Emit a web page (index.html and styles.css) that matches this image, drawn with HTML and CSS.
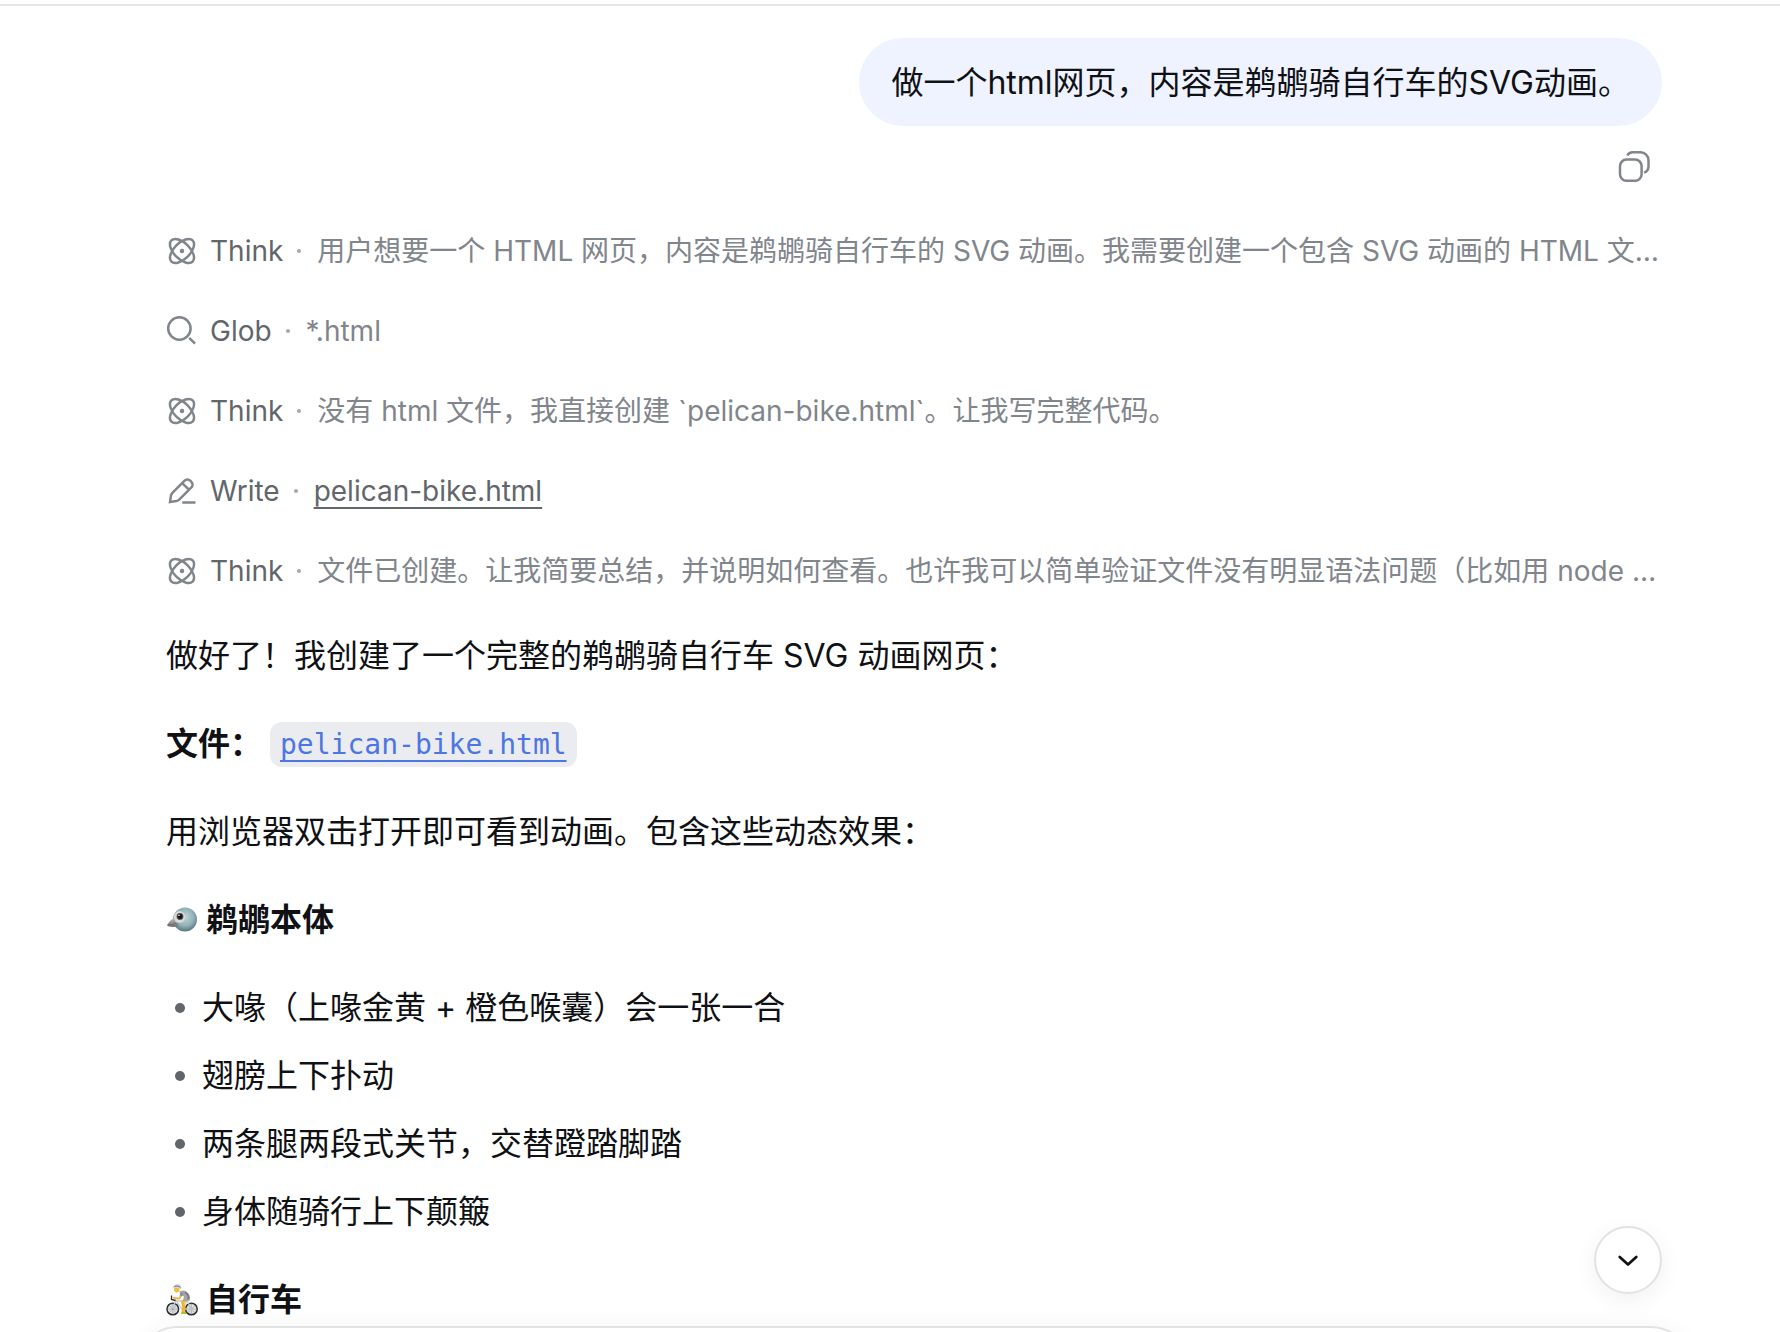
FILE: index.html
```html
<!DOCTYPE html>
<html lang="zh-CN">
<head>
	<meta charset="UTF-8">
	<meta name="viewport" content="width=device-width, initial-scale=1">
	<title>鹈鹕骑自行车</title>
	<link rel="stylesheet" href="styles.css">
</head>
<body>
	<svg class="sprite" aria-hidden="true">
		<symbol id="icon-think" viewBox="0 0 32 32">
			<ellipse cx="16" cy="16" rx="15" ry="8" transform="rotate(45 16 16)"/>
			<ellipse cx="16" cy="16" rx="15" ry="8" transform="rotate(-45 16 16)"/>
			<circle cx="16" cy="16" r="1" />
		</symbol>
	</svg>
	<div class="shell">
		<main class="chat">
			<div class="question">
				<p class="bubble">做一个html网页，内容是鹈鹕骑自行车的SVG动画。</p>
				<button class="copy" type="button" aria-label="复制">
					<svg class="icon" viewBox="0 0 32 32">
						<rect x="2" y="9.6" width="21.6" height="21.2" rx="6.5"/>
						<path d="M9.3 5.6Q10.8 2.2 14.8 2.2H22.5a8 8 0 0 1 8 8V16.500q0 4.600-4.400 6.100"/>
					</svg>
				</button>
			</div>

			<!-- 工具调用 -->
			<div class="steps">
				<div class="step">
					<svg class="icon"><use href="#icon-think"/></svg>
					<span class="name">Think</span>
					<span class="dot"></span>
					<span class="detail">用户想要一个 HTML 网页，内容是鹈鹕骑自行车的 SVG 动画。我需要创建一个包含 SVG 动画的 HTML 文…</span>
				</div>
				<div class="step">
					<svg class="icon" viewBox="0 0 32 32">
						<circle cx="13.4" cy="13.5" r="11.2"/>
						<path d="M23.200 22.900L29 28.700"/>
					</svg>
					<span class="name">Glob</span>
					<span class="dot"></span>
					<span class="detail">*.html</span>
				</div>
				<div class="step">
					<svg class="icon"><use href="#icon-think"/></svg>
					<span class="name">Think</span>
					<span class="dot"></span>
					<span class="detail">没有 html 文件，我直接创建 `pelican-bike.html`。让我写完整代码。</span>
				</div>
				<div class="step">
					<svg class="icon" viewBox="0 0 32 32">
						<path d="M4 27L5 20.500Q5.300 18.900 6.400 17.800L18.600 5.600a3.900 3.900 0 0 1 5.600 0l1.200 1.200a3.900 3.900 0 0 1 0 5.600L13.200 24.600q-1.100 1.100-2.700 1.400ZM16.700 8.600L23 14.700M16.300 27.400H29.500"/>
					</svg>
					<span class="name">Write</span>
					<span class="dot"></span>
					<a class="file" href="#">pelican-bike.html</a>
				</div>
				<div class="step">
					<svg class="icon"><use href="#icon-think"/></svg>
					<span class="name">Think</span>
					<span class="dot"></span>
					<span class="detail">文件已创建。让我简要总结，并说明如何查看。也许我可以简单验证文件没有明显语法问题（比如用 node …</span>
				</div>
			</div>

			<!-- 回答 -->
			<div class="answer">
				<p>做好了！我创建了一个完整的鹈鹕骑自行车 SVG 动画网页：</p>
				<p class="output"><strong>文件：</strong><a class="code" href="#"><code>pelican-bike.html</code></a></p>
				<p>用浏览器双击打开即可看到动画。包含这些动态效果：</p>
				<h3>
					<svg class="emoji" viewBox="0 0 32 32" aria-hidden="true">
						<defs>
							<radialGradient id="head" cx=".5" cy=".4" r=".6">
								<stop offset="0" stop-color="#bfd5d9"/>
								<stop offset=".6" stop-color="#93b2b8"/>
								<stop offset="1" stop-color="#55777f"/>
							</radialGradient>
							<linearGradient id="beak" x1="0" y1="0" x2="0" y2="1">
								<stop offset="0" stop-color="#c9c6c4"/>
								<stop offset="1" stop-color="#6f6b6b"/>
							</linearGradient>
						</defs>
						<ellipse cx="19" cy="15.500" rx="12" ry="12" fill="url(#head)"/>
						<path d="M9 13C6 15 2 18.500 1.200 21.500c2 1.700 7 1.800 10.300.8 1.500-3 .5-7-2.500-9.300z" fill="url(#beak)"/>
						<path d="M1.500 21q5 .2 8.500-2" fill="none" stroke="#625f60" stroke-width=".8"/>
						<ellipse cx="13.500" cy="13" rx="5.600" ry="6" fill="#d7dcda"/>
						<circle cx="14" cy="12.500" r="3.400" fill="#56504e"/>
						<circle cx="14" cy="12.500" r="2.400" fill="#171717"/>
						<circle cx="13" cy="11.300" r=".8" fill="#fff"/>
					</svg>
					<span>鹈鹕本体</span>
				</h3>
				<ul>
					<li>大喙（上喙金黄 + 橙色喉囊）会一张一合</li>
					<li>翅膀上下扑动</li>
					<li>两条腿两段式关节，交替蹬踏脚踏</li>
					<li>身体随骑行上下颠簸</li>
				</ul>
				<h3>
					<svg class="emoji" viewBox="0 0 32 32" aria-hidden="true">
						<g fill="#dfe1e2" stroke="#2b2d30" stroke-width="1.500">
							<circle cx="6.800" cy="25" r="5.800"/>
							<circle cx="25.400" cy="25" r="5.800"/>
						</g>
						<path d="M6.800 19.500v11M1.300 25h11M3 21l7.600 8M10.600 21L3 29M25.400 19.500v11M20 25h11M21.500 21l7.800 8M29.300 21l-7.800 8" stroke="#85898c" stroke-width=".5"/>
						<path d="M6.800 25l3-9 6 9h9.500l-4-8H10.500M16 25l5-8" fill="none" stroke="#c5c9cc" stroke-width="1.300"/>
						<path d="M20.500 15l-3.800 3 1 5-.7 5.500" fill="none" stroke="#f2b62c" stroke-width="3.200" stroke-linejoin="round"/>
						<path d="M15.500 28h4.500v2h-5z" fill="#a3c52c"/>
						<path d="M13.500 7.500q5.500-3 9 2Q25 13 23.500 16.800l-6.500.2 1-4.500-4-2z" fill="#a3a5a8"/>
						<path d="M19 8.500q4 1.500 3.300 7" fill="none" stroke="#737679" stroke-width="1.500"/>
						<path d="M16 8.800L14.800 12" fill="none" stroke="#8b8e91" stroke-width="2.600"/>
						<path d="M14.800 12l-1.600 2.600L7 13.600" fill="none" stroke="#efb333" stroke-width="1.800" stroke-linejoin="round"/>
						<path d="M5.500 11.500v4l4 1" fill="none" stroke="#2b2d30" stroke-width="1.300"/>
						<circle cx="10.800" cy="5.600" r="2.800" fill="#f4bd38"/>
						<path d="M6.500 4.300Q7.500 0 11.500 0q4.500.4 3.700 5.300-3-2-8.700-1z" fill="#d3d6d8"/>
						<path d="M8.500 2.500q3-1.500 6 .8" fill="none" stroke="#62666a" stroke-width=".9"/>
					</svg>
					<span>自行车</span>
				</h3>
			</div>
		</main>

		<form class="composer">
			<textarea aria-label="输入消息"></textarea>
		</form>

		<button class="to-bottom" type="button" aria-label="回到底部">
			<svg viewBox="0 0 32 32"><path d="M7.700 13l8.300 7.600L24.300 13"/></svg>
		</button>
	</div>
</body>
</html>
```
FILE: styles.css
```css
* {
	box-sizing: border-box;
	margin: 0;
	padding: 0;
}
body {
	display: flow-root;
	height: 100vh;
	overflow: hidden;
	background-color: #fff;
	color: #0f1115;
	font: 32px/56px Inter, "Noto Sans CJK SC", sans-serif;
}
button {
	border: none;
	background: none;
	cursor: pointer;
}
.sprite {
	position: absolute;
	width: 0;
	height: 0;
}
.shell {
	position: relative;
	height: 100vh;
	margin-top: 4px;
	border-top: 2px solid #e5e5e5;
	overflow: hidden;
}
.chat {
	padding: 32px 118px 0 166px;
}
.icon {
	flex: none;
	display: block;
	width: 32px;
	height: 32px;
	fill: none;
	stroke: #81858c;
	stroke-width: 2.5;
}

/* 提问 */
.question {
	display: flex;
	flex-direction: column;
	align-items: flex-end;
	gap: 24px;
}
.bubble {
	padding: 17px 32px 15px;
	border-radius: 44px;
	background-color: #eef3ff;
}
.copy {
	margin-right: 12px;
}

/* 工具调用 */
.steps {
	display: flex;
	flex-direction: column;
	gap: 32px;
	margin-top: 45px;
	font-size: 28px;
	line-height: 48px;
}
.step {
	display: flex;
	align-items: center;
}
.name {
	margin-left: 12px;
	color: #61666b;
}
.dot {
	flex: none;
	width: 4px;
	height: 4px;
	margin: 0 16px 0 14px;
	border-radius: 50%;
	background-color: #a5a9b0;
}
.detail {
	min-width: 0;
	overflow: hidden;
	color: #81858c;
	white-space: nowrap;
	text-overflow: ellipsis;
}
.file {
	color: #61666b;
	text-decoration: underline;
	text-decoration-thickness: 2px;
	text-underline-offset: 6px;
}

/* 回答 */
.answer {
	display: flex;
	flex-direction: column;
	gap: 32px;
	margin-top: 33px;
}
.output {
	display: flex;
	align-items: center;
	gap: 8px;
}
strong,
h3 {
	font-size: 32px;
	font-weight: 600;
}
.code {
	padding: 0 10px;
	border-radius: 12px;
	background-color: #ebecf0;
	color: #4d76e5;
	font-size: 28px;
	line-height: 44px;
	text-decoration-thickness: 2px;
	text-underline-offset: 6px;
}
code {
	font-family: "DejaVu Sans Mono", monospace;
	font-size: 28px;
}
h3 {
	display: flex;
	align-items: center;
	gap: 8px;
}
.emoji {
	flex: none;
	width: 32px;
	height: 32px;
}
ul {
	display: flex;
	flex-direction: column;
	gap: 12px;
	list-style: none;
}
li {
	display: grid;
	grid-template-columns: 36px 1fr;
	align-items: center;
}
li::before {
	content: "";
	width: 10px;
	height: 10px;
	margin-left: 9px;
	border-radius: 50%;
	background-color: #61666b;
}

/* 输入框 */
.composer {
	position: relative;
	height: 200px;
	margin: -2px 86px 0 134px;
	border: 2px solid #e2e2e2;
	border-radius: 44px;
	background-color: #fff;
	box-shadow: 0 0 24px rgba(0, 0, 0, .04);
}
.composer textarea {
	width: 100%;
	height: 100%;
	padding: 32px;
	border: none;
	outline: none;
	background: none;
	font: inherit;
	resize: none;
}
.to-bottom {
	position: absolute;
	right: 118px;
	bottom: 42px;
	display: flex;
	align-items: center;
	justify-content: center;
	width: 68px;
	height: 68px;
	border: 2px solid #e2e2e2;
	border-radius: 50%;
	background-color: #fff;
	box-shadow: 0 6px 24px rgba(0, 0, 0, .06);
}
.to-bottom svg {
	width: 32px;
	height: 32px;
	fill: none;
	stroke: #0f1115;
	stroke-width: 2.7;
	stroke-linecap: round;
	stroke-linejoin: round;
}
```
